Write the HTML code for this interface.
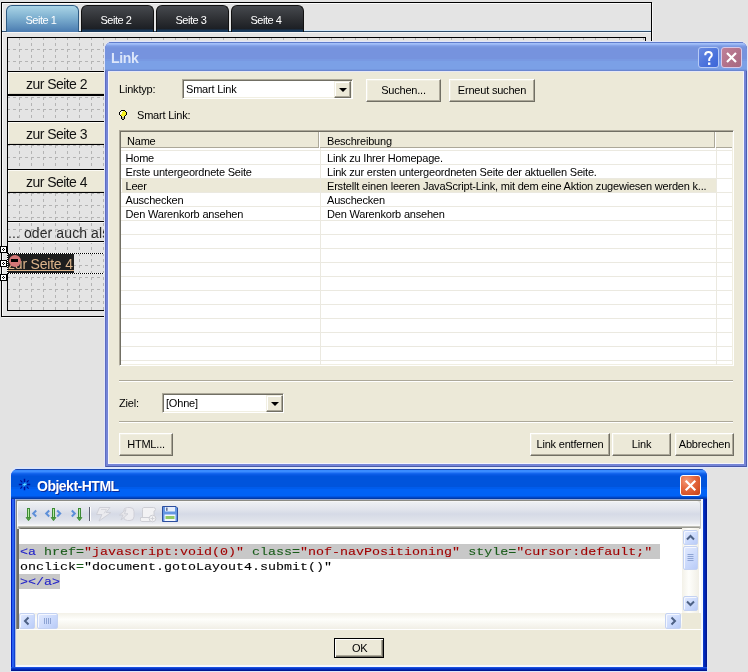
<!DOCTYPE html>
<html><head><meta charset="utf-8">
<style>
*{box-sizing:border-box}
html,body{margin:0;padding:0}
body{will-change:transform;width:748px;height:672px;overflow:hidden;background:#e3e3e3;position:relative;font-family:"Liberation Sans",sans-serif;font-size:11px;color:#000;letter-spacing:-0.2px}
.a{position:absolute}
.t{position:absolute;white-space:pre;line-height:1}
/* editor */
.tab{position:absolute;top:5px;width:73px;height:27px;border-radius:6px 6px 0 0;border:1px solid #111;border-bottom:none;color:#fff;font-size:11px;text-align:center;letter-spacing:-0.45px}
.tab span{position:absolute;left:-3px;right:0;top:8px;line-height:12px}
.btn2{position:absolute;left:8px;width:97px;background:#ece9d8;border-top:1px solid #000;box-shadow:inset 0 1px #fbfaf4, inset 1px 0 #f6f5ee, inset 0 -1px #d8d4c4}
.btn2 span{position:absolute;left:18px;top:4px;font-size:14px;line-height:16px;color:#111;letter-spacing:-0.55px}
/* xp classic controls */
.xbtn{position:absolute;background:#ece9d8;border:1px solid;border-color:#fff #716f64 #716f64 #fff;box-shadow:inset -1px -1px #aca899, inset 1px 1px #f1efe2}
.xbtn span{position:absolute;left:0;right:0;text-align:center;top:4px;line-height:12px}
.sunk{position:absolute;background:#fff;border:1px solid;border-color:#aca899 #fff #fff #aca899;box-shadow:inset 1px 1px #716f64, inset -1px -1px #f1efe2}
.dd{position:absolute;background:#ece9d8;border:1px solid;border-color:#f1efe2 #716f64 #716f64 #f1efe2;box-shadow:inset -1px -1px #aca899, inset 1px 1px #fff}
.dd:after{content:"";position:absolute;left:3.5px;top:6px;border-left:4px solid transparent;border-right:4px solid transparent;border-top:4px solid #000}
.row{position:absolute;height:14px;line-height:14px;white-space:pre}
.sbb{position:absolute;border:1px solid #c4d2f2;border-radius:2px;background:linear-gradient(135deg,#e2eafe,#c6d6fb 70%,#b9cbf7);box-shadow:inset 1px 1px #f4f7ff}
.code{font-family:"Liberation Mono",monospace;font-size:11px;font-weight:normal;-webkit-text-stroke:0.1px;letter-spacing:0px;transform:scaleX(1.21212);transform-origin:0 0;line-height:15px;position:absolute;white-space:pre}
</style></head><body>

<!-- ============ EDITOR PANEL ============ -->
<div class="a" style="left:1px;top:2px;width:651px;height:315px;border:1px solid #000;background:#e4e4e4;box-shadow:inset 1px 1px #fafafa, 1px 1px #f6f6f6"></div>
<!-- tab strip lines -->
<div class="a" style="left:2px;top:30px;width:649px;height:1px;background:#d6e9f8"></div>
<div class="a" style="left:2px;top:31px;width:649px;height:1px;background:#2f4d6b"></div>
<div class="a" style="left:2px;top:32px;width:649px;height:1px;background:#f6f6f6"></div>
<!-- tabs -->
<div class="tab" style="left:6px;border-color:#2d5a82;background:linear-gradient(#aad4e6,#7eb0d0 45%,#4a7bb0)"><span>Seite 1</span></div>
<div class="tab" style="left:81px;background:linear-gradient(#46494e,#2c2e32 55%,#1c1f24 23px,#18385a 24px,#183a5c 26px)"><span>Seite 2</span></div>
<div class="tab" style="left:156px;background:linear-gradient(#46494e,#2c2e32 55%,#1c1f24 23px,#18385a 24px,#183a5c 26px)"><span>Seite 3</span></div>
<div class="tab" style="left:231px;background:linear-gradient(#46494e,#2c2e32 55%,#1c1f24 23px,#18385a 24px,#183a5c 26px)"><span>Seite 4</span></div>

<!-- inner rect with grid -->
<div class="a" style="left:7px;top:37px;width:639px;height:274px;border:1px solid #000;background:#e4e4e4"></div>
<svg class="a" style="left:8px;top:38px" width="637" height="272">
<defs><pattern id="g" x="-1" y="-1" width="12" height="12" patternUnits="userSpaceOnUse">
<path d="M0 0.5H3M6 0.5H9M0.5 0V3M0.5 6V9" stroke="#b4b4b4" stroke-width="1" fill="none"/>
</pattern></defs>
<rect width="637" height="272" fill="url(#g)"/>
</svg>

<!-- buttons -->
<div class="btn2" style="top:71px;height:25px;border-bottom:2px solid #000"><span>zur Seite 2</span></div>
<div class="btn2" style="top:121px;height:24px;border-bottom:1px solid #000"><span>zur Seite 3</span></div>
<div class="btn2" style="top:169px;height:24px;border-bottom:1px solid #000"><span>zur Seite 4</span></div>
<!-- oder auch als -->
<div class="a" style="left:8px;top:221px;width:97px;height:1px;background:#000"></div>
<div class="a" style="left:8px;top:241px;width:97px;height:1px;background:#000"></div><div class="a" style="left:8px;top:222px;width:97px;height:1px;background:#f4f4f4"></div><div class="a" style="left:8px;top:242px;width:97px;height:1px;background:#f4f4f4"></div>
<div class="t" style="left:8px;top:225px;font-size:14px;line-height:16px;color:#2a2a2a;letter-spacing:0.1px">... oder auch als</div>

<!-- selected element -->
<div class="a" style="left:8px;top:254px;width:66px;height:19px;background:#1e1e1e"></div>
<div class="t" style="left:8px;top:256px;font-size:14px;line-height:16px;color:#dcb48a">zur Seite 4</div>
<div class="a" style="left:8px;top:270px;width:66px;height:1px;background:#dcb48a"></div>
<div class="a" style="left:9px;top:255px;width:12px;height:12px;border-radius:50%;background:#d47777"></div>
<div class="a" style="left:11px;top:259px;width:7px;height:3px;background:#000"></div>
<!-- dotted selection lines -->
<div class="a" style="left:8px;top:253px;width:97px;height:1px;background:repeating-linear-gradient(90deg,#000 0 1px,#fff 1px 2px)"></div>
<div class="a" style="left:8px;top:273px;width:97px;height:1px;background:repeating-linear-gradient(90deg,#000 0 1px,#fff 1px 2px)"></div>
<div class="a" style="left:7px;top:253px;width:1px;height:21px;background:repeating-linear-gradient(#000 0 1px,#fff 1px 2px)"></div>
<!-- handles -->
<svg class="a" style="left:0;top:0" width="8" height="300" shape-rendering="crispEdges"><rect x="0" y="246" width="7" height="7" fill="#000"/><rect x="1" y="247" width="5" height="5" fill="#fff"/><rect x="3" y="248" width="1" height="1" fill="#000"/><rect x="2" y="249" width="1" height="1" fill="#000"/><rect x="4" y="249" width="1" height="1" fill="#000"/><rect x="3" y="250" width="1" height="1" fill="#000"/><rect x="0" y="260" width="7" height="7" fill="#000"/><rect x="1" y="261" width="5" height="5" fill="#fff"/><rect x="3" y="262" width="1" height="1" fill="#000"/><rect x="2" y="263" width="1" height="1" fill="#000"/><rect x="4" y="263" width="1" height="1" fill="#000"/><rect x="3" y="264" width="1" height="1" fill="#000"/><rect x="0" y="274" width="7" height="7" fill="#000"/><rect x="1" y="275" width="5" height="5" fill="#fff"/><rect x="3" y="276" width="1" height="1" fill="#000"/><rect x="2" y="277" width="1" height="1" fill="#000"/><rect x="4" y="277" width="1" height="1" fill="#000"/><rect x="3" y="278" width="1" height="1" fill="#000"/></svg>

<!-- ============ LINK DIALOG (inactive) ============ -->
<div class="a" style="left:104px;top:41px;width:644px;height:427px;border-radius:8px 8px 0 0;background:#e2e6f8"></div>
<div class="a" style="left:105px;top:42px;width:642px;height:425px;border-radius:7px 7px 0 0;background:#7484d6;box-shadow:inset 1px 0 #5d6cc0, inset -1px 0 #4c5cb0, inset 0 -1px #4858a8;overflow:hidden">
  <div class="a" style="left:0;top:0;width:642px;height:29px;background:linear-gradient(#5f7dcc 0px 1px,#a4c0f8 1px 2px,#98b6f4 2px 3px,#86a4ea 3px 4px,#7c9ae2 4px 5px,#7896de 5px 6px,#7693de 6px 17px,#7899e2 17px 19px,#7ba0e6 19px 27px,#7598e0 27px 28px,#6a86d0 28px 29px)"></div>
  <div class="t" style="left:6px;top:9px;font-size:14px;font-weight:bold;color:#dce6fa;letter-spacing:-0.3px">Link</div>
  <!-- help btn -->
  <div class="a" style="left:593px;top:5px;width:21px;height:21px;border:1px solid #b8cbf5;border-radius:3px;background:linear-gradient(135deg,#6a8ae0,#4a72dc 60%,#3d66d8)"></div>
  <svg class="a" style="left:593px;top:5px" width="21" height="21"><path d="M7.2 8.2C7.2 6.2 8.6 5 10.5 5C12.4 5 13.8 6.2 13.8 8C13.8 10.2 11.2 10.4 11.2 12.6V14" stroke="#fff" stroke-width="2" fill="none"/><rect x="10" y="15.5" width="2.4" height="2.4" fill="#fff"/></svg>
  <!-- close btn -->
  <div class="a" style="left:616px;top:5px;width:21px;height:21px;border:1px solid #d8c8e8;border-radius:3px;background:linear-gradient(135deg,#c08098,#b07088 60%,#a86880)"></div>
  <svg class="a" style="left:616px;top:5px" width="21" height="21"><path d="M6 6L15 15M15 6L6 15" stroke="#fff" stroke-width="2.2"/></svg>
  <!-- client -->
  <div class="a" style="left:3px;top:29px;width:636px;height:393px;background:#ece9d8;box-shadow:inset 0 1px #e6e8f6, inset 1px 0 #f4f4fb, inset 0 -1px #f4f4fb, inset -1px 0 #f4f4fb"></div>
</div>

<!-- link dialog contents (page coords) -->
<div class="t" style="left:119px;top:84px">Linktyp:</div>
<div class="sunk" style="left:182px;top:79px;width:171px;height:20px"></div>
<div class="t" style="left:186px;top:84px">Smart Link</div>
<div class="dd" style="left:334px;top:81px;width:17px;height:17px"></div>
<div class="xbtn" style="left:366px;top:79px;width:75px;height:23px"><span>Suchen...</span></div>
<div class="xbtn" style="left:449px;top:79px;width:86px;height:23px"><span>Erneut suchen</span></div>
<!-- bulb -->
<svg class="a" style="left:118px;top:109px" width="10" height="12" shape-rendering="crispEdges"><rect x="3" y="1" width="1" height="1" fill="#000"/><rect x="4" y="1" width="1" height="1" fill="#000"/><rect x="5" y="1" width="1" height="1" fill="#000"/><rect x="6" y="1" width="1" height="1" fill="#000"/><rect x="2" y="2" width="1" height="1" fill="#000"/><rect x="7" y="2" width="1" height="1" fill="#000"/><rect x="3" y="2" width="1" height="1" fill="#f8f8e8"/><rect x="4" y="2" width="1" height="1" fill="#f8f8e8"/><rect x="5" y="2" width="1" height="1" fill="#f4f020"/><rect x="6" y="2" width="1" height="1" fill="#f4f020"/><rect x="1" y="3" width="1" height="1" fill="#000"/><rect x="8" y="3" width="1" height="1" fill="#000"/><rect x="2" y="3" width="1" height="1" fill="#f8f8e8"/><rect x="3" y="3" width="1" height="1" fill="#f8f8e8"/><rect x="4" y="3" width="1" height="1" fill="#f4f020"/><rect x="5" y="3" width="1" height="1" fill="#f4f020"/><rect x="6" y="3" width="1" height="1" fill="#f4f020"/><rect x="7" y="3" width="1" height="1" fill="#f4f020"/><rect x="1" y="4" width="1" height="1" fill="#000"/><rect x="8" y="4" width="1" height="1" fill="#000"/><rect x="2" y="4" width="1" height="1" fill="#f8f8e8"/><rect x="3" y="4" width="1" height="1" fill="#f8f8e8"/><rect x="4" y="4" width="1" height="1" fill="#f4f020"/><rect x="5" y="4" width="1" height="1" fill="#f4f020"/><rect x="6" y="4" width="1" height="1" fill="#f4f020"/><rect x="7" y="4" width="1" height="1" fill="#f4f020"/><rect x="1" y="5" width="1" height="1" fill="#000"/><rect x="8" y="5" width="1" height="1" fill="#000"/><rect x="2" y="5" width="1" height="1" fill="#f8f8e8"/><rect x="3" y="5" width="1" height="1" fill="#f4f020"/><rect x="4" y="5" width="1" height="1" fill="#f4f020"/><rect x="5" y="5" width="1" height="1" fill="#f4f020"/><rect x="6" y="5" width="1" height="1" fill="#f4f020"/><rect x="7" y="5" width="1" height="1" fill="#f4f020"/><rect x="2" y="6" width="1" height="1" fill="#000"/><rect x="7" y="6" width="1" height="1" fill="#000"/><rect x="3" y="6" width="1" height="1" fill="#f4f020"/><rect x="4" y="6" width="1" height="1" fill="#f4f020"/><rect x="5" y="6" width="1" height="1" fill="#f4f020"/><rect x="6" y="6" width="1" height="1" fill="#f4f020"/><rect x="3" y="7" width="1" height="1" fill="#000"/><rect x="6" y="7" width="1" height="1" fill="#000"/><rect x="4" y="7" width="1" height="1" fill="#fafa80"/><rect x="5" y="7" width="1" height="1" fill="#fafa80"/><rect x="3" y="8" width="1" height="1" fill="#000"/><rect x="6" y="8" width="1" height="1" fill="#000"/><rect x="4" y="8" width="1" height="1" fill="#a8a890"/><rect x="5" y="8" width="1" height="1" fill="#a8a890"/><rect x="3" y="9" width="1" height="1" fill="#000"/><rect x="6" y="9" width="1" height="1" fill="#000"/><rect x="4" y="9" width="1" height="1" fill="#a8a890"/><rect x="5" y="9" width="1" height="1" fill="#a8a890"/><rect x="4" y="10" width="1" height="1" fill="#000"/><rect x="5" y="10" width="1" height="1" fill="#000"/></svg>
<div class="t" style="left:137px;top:110px">Smart Link:</div>

<!-- list view -->
<div class="a" style="left:119px;top:130px;width:615px;height:236px;background:#fff;border:1px solid;border-color:#aca899 #fff #fff #aca899;box-shadow:inset 1px 1px #716f64, inset -1px -1px #f1efe2"></div>
<!-- header -->
<div class="a" style="left:121px;top:132px;width:611px;height:16px;background:#ece9d8"></div>
<div class="a" style="left:121px;top:147px;width:198px;height:1px;background:#aca899"></div>
<div class="a" style="left:318px;top:132px;width:1px;height:16px;background:#aca899"></div>
<div class="a" style="left:319px;top:132px;width:1px;height:16px;background:#fff"></div>
<div class="a" style="left:320px;top:147px;width:395px;height:1px;background:#aca899"></div>
<div class="a" style="left:714px;top:132px;width:1px;height:16px;background:#aca899"></div>
<div class="a" style="left:715px;top:132px;width:1px;height:16px;background:#fff"></div>
<div class="a" style="left:716px;top:147px;width:16px;height:1px;background:#aca899"></div>
<div class="t" style="left:127px;top:136px">Name</div>
<div class="t" style="left:327px;top:136px">Beschreibung</div>
<!-- grid rows -->
<svg class="a" style="left:121px;top:148px" width="611" height="217" shape-rendering="crispEdges">
<defs><pattern id="rows" x="0" y="2" width="611" height="14" patternUnits="userSpaceOnUse"><rect x="0" y="0" width="611" height="1" fill="#ebe9e0"/></pattern></defs>
<rect x="1" y="31" width="594" height="13" fill="#ece9d8"/>
<rect width="611" height="217" fill="url(#rows)"/>
<rect x="199" y="0" width="1" height="217" fill="#ebe9e0"/>
<rect x="595" y="0" width="1" height="217" fill="#ebe9e0"/>
</svg>
<div class="t" style="left:125.5px;top:153px">Home</div>
<div class="t" style="left:327px;top:153px">Link zu Ihrer Homepage.</div>
<div class="t" style="left:125.5px;top:167px">Erste untergeordnete Seite</div>
<div class="t" style="left:327px;top:167px">Link zur ersten untergeordneten Seite der aktuellen Seite.</div>
<div class="t" style="left:125.5px;top:181px">Leer</div>
<div class="t" style="left:327px;top:181px">Erstellt einen leeren JavaScript-Link, mit dem eine Aktion zugewiesen werden k...</div>
<div class="t" style="left:125.5px;top:195px">Auschecken</div>
<div class="t" style="left:327px;top:195px">Auschecken</div>
<div class="t" style="left:125.5px;top:209px">Den Warenkorb ansehen</div>
<div class="t" style="left:327px;top:209px">Den Warenkorb ansehen</div>

<!-- separators -->
<div class="a" style="left:119px;top:380px;width:614px;height:1px;background:#aca899"></div>
<div class="a" style="left:119px;top:381px;width:614px;height:1px;background:#fff"></div>
<div class="t" style="left:119px;top:398px">Ziel:</div>
<div class="sunk" style="left:162px;top:393px;width:122px;height:20px"></div>
<div class="t" style="left:166px;top:398px">[Ohne]</div>
<div class="dd" style="left:266px;top:395px;width:17px;height:17px"></div>
<div class="a" style="left:119px;top:421px;width:614px;height:1px;background:#aca899"></div>
<div class="a" style="left:119px;top:422px;width:614px;height:1px;background:#fff"></div>

<div class="xbtn" style="left:119px;top:433px;width:54px;height:23px"><span>HTML...</span></div>
<div class="xbtn" style="left:530px;top:433px;width:80px;height:23px"><span>Link entfernen</span></div>
<div class="xbtn" style="left:612px;top:433px;width:59px;height:23px"><span>Link</span></div>
<div class="xbtn" style="left:675px;top:433px;width:59px;height:23px"><span>Abbrechen</span></div>

<!-- ============ OBJEKT-HTML DIALOG (active) ============ -->
<div class="a" style="left:10px;top:467px;width:698px;height:205px;border-radius:8px 8px 0 0;background:#dce6fa"></div>
<div class="a" style="left:11px;top:469px;width:696px;height:202px;border-radius:7px 7px 0 0;overflow:hidden;background:linear-gradient(90deg,#0020c0 0 1px,#2860f0 1px 3px,#1040d0 3px 4px) left/4px 100% no-repeat, linear-gradient(90deg,#0838c8 0 1px,#0028b8 1px 2px,#0020a8 2px 3px,#001890 3px 4px) right/4px 100% no-repeat,#0831d9">
  <div class="a" style="left:0;top:0;width:696px;height:30px;background:linear-gradient(#1848b0 0px 1px,#3a8cff 1px 3px,#2a7af8 3px 4px,#1466ee 4px 5px,#0a5ce6 5px 6px,#0656e0 6px 7px,#0054dc 7px 18px,#005cec 18px 20px,#0062f6 20px 27px,#0056e4 27px 28px,#0046c8 28px 29px,#003aa8 29px 30px)"></div>
  <div class="a" style="left:0;top:198px;width:696px;height:4px;background:linear-gradient(#1a50e0 0 1px,#0838c8 1px 2px,#0028b8 2px 3px,#001890 3px 4px)"></div>
</div>
<!-- client -->
<div class="a" style="left:15px;top:499px;width:688px;height:168px;background:#ece9d8;box-shadow:inset 1px 0 #a8b8e0, inset -2px 0 #f4f8ff, inset 0 -2px #f4f8ff, inset 0 1px #98a8d0"></div>
<div class="a" style="left:16px;top:500px;width:1px;height:129px;background:#8c8c84"></div>
<div class="a" style="left:16px;top:500px;width:685px;height:1px;background:#8c8c84"></div>
<!-- title -->
<svg class="a" style="left:18px;top:478px" width="14" height="14">
<g stroke="#000e96" stroke-width="1.5"><path d="M6.5 0.8V4M6.5 9V12.2M0.8 6.5H4M9 6.5H12.2"/></g>
<g stroke="#000e96" stroke-width="1.2"><path d="M2.4 2.4L4.3 4.3M8.7 8.7L10.6 10.6M10.6 2.4L8.7 4.3M4.3 8.7L2.4 10.6"/></g>
<path d="M9 3.6L4 7.3H6.5L4.2 9.6L9.2 5.8H6.8Z" fill="#64e0ff"/></svg>
<div class="t" style="left:37px;top:479px;font-size:14px;font-weight:bold;color:#fff;letter-spacing:-0.5px;text-shadow:1px 1px #0a2a9a">Objekt-HTML</div>
<div class="a" style="left:680px;top:475px;width:21px;height:21px;border:1px solid #fff;border-radius:3px;background:radial-gradient(circle at 30% 25%,#f49a78 0,#e66a40 40%,#d24e22 80%,#c04018)"></div>
<svg class="a" style="left:680px;top:475px" width="21" height="21"><path d="M6.5 6.5L14.5 14.5M14.5 6.5L6.5 14.5" stroke="#fff" stroke-width="2.2" stroke-linecap="square"/></svg>

<!-- toolbar -->
<div class="a" style="left:17px;top:501px;width:684px;height:28px;border-radius:3px 3px 3px 3px;background:linear-gradient(#f6f6f6 0 1px,#eef0f3 1px,#e2e5ec 8px,#d6dae6 13px,#dfe2ea 19px,#eceef2 23px,#f8f8f8 24px 25px,#c0c0b8 25px 26px,#9c9c94 26px 27px,#6e6e66 27px 28px);box-shadow:inset 1px 0 #f8f8f8, inset -1px 0 #c8c8c8"></div>
<!-- icons -->
<svg class="a" style="left:22px;top:504px" width="170" height="20">
 <defs>
  <linearGradient id="sh" x1="0" x2="1"><stop offset="0" stop-color="#c8f4b8"/><stop offset="1" stop-color="#78c868"/></linearGradient>
 </defs>
 <!-- icon1: down arrow + < -->
 <g stroke-linejoin="miter">
  <rect x="5.5" y="4.5" width="2" height="9" fill="#b4eca0" stroke="#3d8a36"/>
  <path d="M4 13.5H9L6.5 16.8Z" fill="#4f9e40" stroke="#3d8a36" stroke-width="0.7"/>
  <path d="M14.2 6.5L11.2 9.5L14.2 12.5" stroke="#5d8fd8" stroke-width="2" fill="none"/>
  <path d="M27.2 6.5L24.2 9.5L27.2 12.5" stroke="#5d8fd8" stroke-width="2" fill="none"/>
  <rect x="30.5" y="4.5" width="2" height="9" fill="#b4eca0" stroke="#3d8a36"/>
  <path d="M29 13.5H34L31.5 16.8Z" fill="#4f9e40" stroke="#3d8a36" stroke-width="0.7"/>
  <path d="M35.2 6.5L38.2 9.5L35.2 12.5" stroke="#5d8fd8" stroke-width="2" fill="none"/>
  <path d="M49.8 6.5L52.8 9.5L49.8 12.5" stroke="#5d8fd8" stroke-width="2" fill="none"/>
  <rect x="56.5" y="4.5" width="2" height="9" fill="#b4eca0" stroke="#3d8a36"/>
  <path d="M55 13.5H60L57.5 16.8Z" fill="#4f9e40" stroke="#3d8a36" stroke-width="0.7"/>
 </g>
 <!-- separator -->
 <rect x="67" y="3" width="1" height="14" fill="#5c6070"/>
 <rect x="68" y="3" width="1" height="14" fill="#fff"/>
 <!-- lightning disabled -->
 <path d="M77.5 3.5H88L84 8.5H89L77 17L80 10.5H74.5Z" fill="#ebebef" stroke="#cfd0d8" stroke-width="1"/>
 <path d="M79 5.5H84.5L82 9.5" fill="none" stroke="#d6d6dc" stroke-width="1"/>
 <!-- refresh disabled -->
 <rect x="101.5" y="3.5" width="10.5" height="13" rx="4" fill="#ececf0" stroke="#d0d0d8"/>
 <path d="M104 5.5L97.5 11H101L99 16L106 9.8H102.5Z" fill="#e6e6ea" stroke="#cdced6" stroke-width="0.9"/>
 <!-- scroll + -->
 <g fill="#f2f2f4" stroke="#cdced4" stroke-width="1">
  <path d="M121.5 3.5H131.5Q133.5 3.5 133.5 5.5Q133.5 7 132 7V13.5H120.5V5.5Q120.5 3.5 121.5 3.5Z"/>
  <path d="M118.5 13.5H128.5V17.5H119.5Q118.5 17.5 118.5 15.5Z"/>
  <circle cx="130.5" cy="14.5" r="3.3"/>
  <path d="M130.5 12.5V16.5M128.5 14.5H132.5" stroke-width="0.9"/>
 </g>
 <!-- floppy -->
 <g>
  <path d="M140.5 2.5H154L155.5 4V17.5H140.5Z" fill="#6496e2" stroke="#2d4e9e"/>
  <rect x="143" y="3" width="10" height="4.5" fill="#e6eefc"/>
  <rect x="144.2" y="3.6" width="1.3" height="3.2" fill="#4a5a80"/>
  <rect x="142.5" y="10.5" width="11" height="6.5" fill="#f4f8ff"/>
  <rect x="143.5" y="12" width="9" height="3" fill="#92c864"/>
 </g>
</svg>

<!-- code area -->
<div class="a" style="left:17px;top:529px;width:684px;height:100px;background:#fff;box-shadow:inset 2px 0 #6f6e66"></div>
<div class="a" style="left:19px;top:544px;width:641px;height:15px;background:#c8c8c8"></div>
<div class="a" style="left:19px;top:574px;width:41px;height:15px;background:#c8c8c8"></div>
<div class="code" style="left:20px;top:545px"><span style="color:#2222c8">&lt;a</span> <span style="color:#1a5c1a">href=</span><span style="color:#a00000">"javascript:void(0)"</span> <span style="color:#1a5c1a">class=</span><span style="color:#a00000">"nof-navPositioning"</span> <span style="color:#1a5c1a">style=</span><span style="color:#a00000">"cursor:default;"</span></div>
<div class="code" style="left:20px;top:560px">onclick<span style="color:#1a5c1a">=</span>"document.gotoLayout4.submit()"</div>
<div class="code" style="left:20px;top:575px;color:#2222c8">&gt;&lt;/a&gt;</div>

<!-- v scrollbar -->
<div class="a" style="left:682px;top:528px;width:17px;height:85px;background:linear-gradient(90deg,#f3f1e8,#fefefb 40%,#f1efe6)"></div>
<div class="sbb" style="left:683px;top:530px;width:15px;height:15px"></div>
<div class="sbb" style="left:683px;top:546px;width:15px;height:24px"></div>
<div class="sbb" style="left:683px;top:596px;width:15px;height:15px"></div>
<svg class="a" style="left:683px;top:530px" width="15" height="15"><path d="M4 9.5L7.5 6L11 9.5" stroke="#4d6185" stroke-width="2" fill="none"/></svg>
<svg class="a" style="left:683px;top:596px" width="15" height="15"><path d="M4 5.5L7.5 9L11 5.5" stroke="#4d6185" stroke-width="2" fill="none"/></svg>
<svg class="a" style="left:683px;top:546px" width="15" height="24"><path d="M4.5 8.5H10.5M4.5 10.5H10.5M4.5 12.5H10.5M4.5 14.5H10.5" stroke="#8ea4d4" stroke-width="1"/></svg>
<!-- h scrollbar -->
<div class="a" style="left:19px;top:613px;width:663px;height:16px;background:linear-gradient(#f3f1e8,#fefefb 40%,#f1efe6)"></div>
<div class="a" style="left:682px;top:613px;width:19px;height:16px;background:#ece9d8"></div>
<div class="sbb" style="left:19px;top:613px;width:16px;height:16px"></div>
<div class="sbb" style="left:37px;top:613px;width:21px;height:16px"></div>
<div class="sbb" style="left:665px;top:613px;width:16px;height:16px"></div>
<svg class="a" style="left:19px;top:613px" width="16" height="16"><path d="M9.5 4.5L6 8L9.5 11.5" stroke="#4d6185" stroke-width="2" fill="none"/></svg>
<svg class="a" style="left:665px;top:613px" width="16" height="16"><path d="M6.5 4.5L10 8L6.5 11.5" stroke="#4d6185" stroke-width="2" fill="none"/></svg>
<svg class="a" style="left:37px;top:613px" width="21" height="16"><path d="M7.5 5V11M9.5 5V11M11.5 5V11M13.5 5V11" stroke="#8ea4d4" stroke-width="1"/></svg>
<div class="a" style="left:17px;top:629px;width:684px;height:1px;background:#fff"></div>

<div class="a" style="left:334px;top:638px;width:50px;height:20px;border:1px solid #000;background:#ece9d8;box-shadow:inset 1px 1px #fff, inset -1px -1px #716f64, inset -2px -2px #aca899"></div>
<div class="t" style="left:352px;top:643px">OK</div>

</body></html>
